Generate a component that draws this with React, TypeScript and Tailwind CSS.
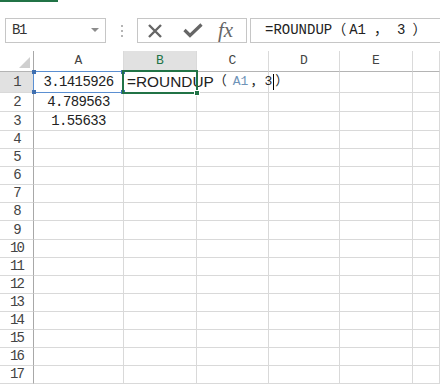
import React from 'react';

const mono = "font-['Liberation_Mono','Noto_Sans_CJK_SC',monospace]";

const rowHeights = [
    'h-[21px]', 'h-[19px]', 'h-[19px]',
    'h-[18.1px]', 'h-[18.1px]', 'h-[18.1px]', 'h-[18.1px]', 'h-[18.1px]', 'h-[18.1px]', 'h-[18.1px]',
    'h-[18.1px]', 'h-[18.1px]', 'h-[18.1px]', 'h-[18.1px]', 'h-[18.1px]', 'h-[18.1px]', 'h-[18.1px]',
];

const values: Record<number, string> = { 1: '3.1415926', 2: '4.789563', 3: '1.55633' };

function Toolbar() {
    return (
        <div className="flex h-[25px] mt-[16px] pl-[5px]">
            <div className="w-[101px] h-full border border-[#c6c6c6] flex items-center justify-between pl-[6px] pr-[6px]">
                <span className={`${mono} text-[14px] tracking-[-1.4px] text-[#333]`}>B1</span>
                <svg width="8" height="5" viewBox="0 0 8 5"><path d="M0 0 L8 0 L4 4 Z" fill="#8c8c8c" /></svg>
            </div>
            <div className="w-[31px] flex flex-col items-center justify-center gap-[3px]">
                <div className="w-[2px] h-[2px] bg-[#b5b5b5]" />
                <div className="w-[2px] h-[2px] bg-[#b5b5b5]" />
                <div className="w-[2px] h-[2px] bg-[#b5b5b5]" />
            </div>
            <div className="w-[110px] h-full border border-[#c6c6c6] flex items-center pl-[9px]">
                <svg width="16" height="16" viewBox="0 0 16 16">
                    <path d="M2 2 L14 14 M14 2 L2 14" stroke="#666" strokeWidth="2.4" />
                </svg>
                <svg className="ml-[20px]" width="20" height="15" viewBox="0 0 20 15">
                    <path d="M1.5 7 L7 12.5 L18.5 1.5" stroke="#666" strokeWidth="3.2" fill="none" />
                </svg>
                <span className="ml-[15px] font-['Liberation_Serif',serif] italic text-[21px] leading-none text-[#666]">fx</span>
            </div>
            <div className="ml-[3px] flex-1 h-full border border-r-0 border-[#c6c6c6] flex items-center pl-[14px] text-[#222]">
                <span className={`${mono} text-[14px] whitespace-nowrap`}>
                    =ROUNDUP<span className="inline-block w-[17px]">（</span>A1<span className="inline-block w-[31px] pl-[8px]">，</span>3<span className="ml-[7px]">）</span>
                </span>
            </div>
        </div>
    );
}

function HeaderRow() {
    const letters = ['A', 'B', 'C', 'D', 'E', ''];
    const widths = ['w-[90px]', 'w-[73px]', 'w-[72px]', 'w-[71px]', 'w-[73px]', 'flex-1'];
    return (
        <div className="flex h-[21px]">
            <div className="w-[34px] border-r border-r-[#a8a8a8] border-b border-b-[#b4b4b4] flex items-end justify-end pr-[3px] pb-[3px]">
                <svg width="11" height="11" viewBox="0 0 11 11"><path d="M11 0 L11 11 L0 11 Z" fill="#cfcfcf" /></svg>
            </div>
            {letters.map((l, i) => (
                <div
                    key={i}
                    className={`${widths[i]} ${mono} text-[13px] flex items-center justify-center border-r border-r-[#dadada] ${
                        l === 'B'
                            ? 'bg-[#e1e1e1] text-[#217346] border-b-2 border-b-[#217346]'
                            : 'text-[#444] border-b border-b-[#b4b4b4]'
                    }`}
                >
                    {l}
                </div>
            ))}
        </div>
    );
}

function BodyRow({ n, h }: { n: number; h: string }) {
    const cell = 'border-r border-b border-[#d9d9d9] flex items-center';
    return (
        <div className={`flex ${h}`}>
            <div
                className={`w-[34px] border-r border-r-[#a8a8a8] border-b border-b-[#d9d9d9] flex items-center justify-center ${mono} text-[14px] tracking-[-2px] text-[#444] ${
                    n === 1 ? 'bg-[#e1e1e1]' : ''
                }`}
            >
                {n}
            </div>
            <div className={`w-[90px] ${cell} justify-center ${mono} text-[14px] tracking-[-0.6px] text-[#222]`}>
                {values[n] ?? ''}
            </div>
            <div className={`w-[73px] ${cell} pl-[3px] overflow-visible whitespace-nowrap relative z-10`}>
                {n === 1 && (
                    <span className="flex items-center text-[#222]">
                        <span className="font-['Liberation_Sans',sans-serif] text-[15.4px]">=ROUNDUP</span>
                        <span className={`${mono} text-[13px] flex items-center`}>
                            <span className="inline-block w-[19px] text-left">（</span>
                            <span className="text-[#6f93b8]">A1</span>
                            <span className="inline-block w-[16px] pl-[2px]">，</span>
                            3
                            <span className="inline-block w-px h-[16px] bg-black mx-[1px]" />
                            ）
                        </span>
                    </span>
                )}
            </div>
            <div className={`w-[72px] ${cell}`} />
            <div className={`w-[71px] ${cell}`} />
            <div className={`w-[73px] ${cell}`} />
            <div className={`flex-1 ${cell}`} />
        </div>
    );
}

export default function App() {
    return (
        <div className="w-[440px] h-[385px] bg-white overflow-hidden">
            <div className="w-[58px] h-[2px] bg-[#217346]" />
            <Toolbar />
            <div className="relative mt-[8px]">
                <HeaderRow />
                {rowHeights.map((h, i) => (
                    <BodyRow key={i} n={i + 1} h={h} />
                ))}

                {/* A1 reference box */}
                <div className="absolute left-[33px] top-[20px] w-[91px] h-[22px] border border-[#5b8fd1] pointer-events-none">
                    <div className="absolute -left-[2px] -top-[2px] w-[4px] h-[4px] bg-[#3f6fb0]" />
                    <div className="absolute -right-[2px] -top-[2px] w-[4px] h-[4px] bg-[#3f6fb0]" />
                    <div className="absolute -left-[2px] -bottom-[2px] w-[4px] h-[4px] bg-[#3f6fb0]" />
                    <div className="absolute -right-[2px] -bottom-[2px] w-[4px] h-[4px] bg-[#3f6fb0]" />
                </div>

                {/* B1 selection */}
                <div className="absolute left-[122px] top-[19px] w-[76px] h-[24px] border-2 border-[#217346] pointer-events-none z-20">
                    <div className="absolute -right-[4px] -bottom-[4px] w-[6px] h-[6px] bg-[#217346] border border-white" />
                </div>
            </div>
        </div>
    );
}
